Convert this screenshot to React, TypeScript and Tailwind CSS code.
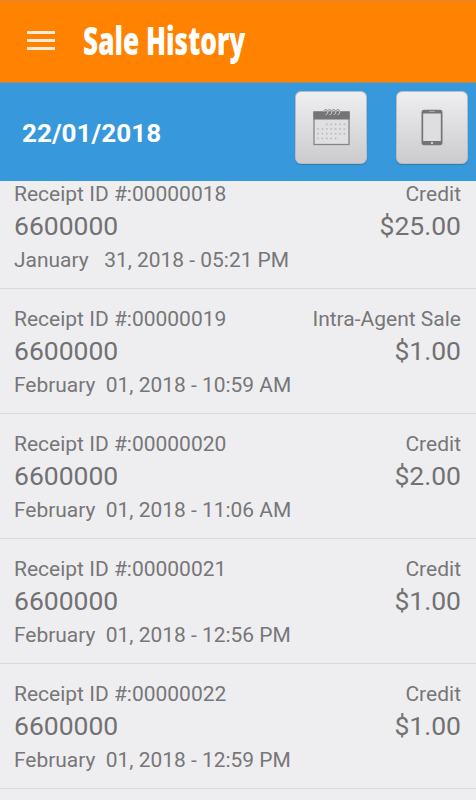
import type { ReactNode } from 'react';

type Sale = { id: string; type: string; account: string; amount: string; date: string };

const sales: Sale[] = [
  { id: '00000018', type: 'Credit', account: '6600000', amount: '$25.00', date: 'January   31, 2018 - 05:21 PM' },
  { id: '00000019', type: 'Intra-Agent Sale', account: '6600000', amount: '$1.00', date: 'February  01, 2018 - 10:59 AM' },
  { id: '00000020', type: 'Credit', account: '6600000', amount: '$2.00', date: 'February  01, 2018 - 11:06 AM' },
  { id: '00000021', type: 'Credit', account: '6600000', amount: '$1.00', date: 'February  01, 2018 - 12:56 PM' },
  { id: '00000022', type: 'Credit', account: '6600000', amount: '$1.00', date: 'February  01, 2018 - 12:59 PM' },
];

function CalendarIcon() {
  const dots: [number, number][] = [];
  for (let row = 0; row < 4; row++) {
    for (let col = 0; col < 7; col++) {
      if (row === 0 && col < 2) continue;
      if (row === 3 && col > 4) continue;
      dots.push([5 + col * 4.4, 15.3 + row * 4.7]);
    }
  }
  return (
    <svg width="37" height="37" viewBox="0 0 37 37" fill="none">
      <rect x="1" y="3" width="35" height="32.5" fill="#e0dfe1" stroke="#858585" strokeWidth="1.3" />
      <rect x="0.4" y="2.5" width="36.2" height="8" fill="#747474" />
      {[11, 15, 19, 23].map((x) => (
        <path key={x} d={`M${x} 2.5c0-2.6 3.6-2.6 3.8.2 0 2-1.1 3-2.3 3`} stroke="#cfcfd0" strokeWidth="1" />
      ))}
      {[11, 15, 19, 23].map((x) => (
        <path key={x} d={`M${x} 1.7c.4-1.5 3-1.5 3.5.4`} stroke="#858585" strokeWidth="1" />
      ))}
      {dots.map(([x, y]) => (
        <rect key={`${x}-${y}`} x={x - 0.8} y={y - 0.8} width="1.6" height="1.6" fill="#bab9bb" />
      ))}
    </svg>
  );
}

function PhoneIcon() {
  return (
    <svg width="22" height="37" viewBox="0 0 22 37" fill="none">
      <rect x="0.5" y="0.7" width="21" height="35.5" rx="2.6" fill="#747474" />
      <rect x="2.2" y="4.5" width="17.6" height="27.5" fill="#dedddf" />
      <path d="M8 2.5h6" stroke="#aaa" strokeWidth="0.9" />
      <circle cx="11" cy="34" r="1.2" fill="#d0d0d0" />
    </svg>
  );
}

function ToolButton({ label, children }: { label: string; children: ReactNode }) {
  return (
    <button
      aria-label={label}
      className="flex h-[73px] w-[72px] items-center justify-center rounded-[6px] border border-[#b5bcc3] bg-linear-to-b from-[#efeef0] to-[#cbcacc] shadow-[0_1px_1px_rgba(60,80,100,0.45)]"
    >
      {children}
    </button>
  );
}

function SaleRow({ sale }: { sale: Sale }) {
  return (
    <li className="h-[125px] border-b border-[#d9d9db] pt-[15px] pr-[15px] pl-[14px] text-[21px] text-[#777678]">
      <div className="flex justify-between leading-[30px]">
        <span>Receipt ID #:{sale.id}</span>
        <span>{sale.type}</span>
      </div>
      <div className="flex justify-between text-[26.5px] leading-[34px] text-[#727173]">
        <span>{sale.account}</span>
        <span>{sale.amount}</span>
      </div>
      <div className="text-[20.95px] leading-[34px] whitespace-pre">{sale.date}</div>
    </li>
  );
}

export default function App() {
  return (
    <div className="flex h-[800px] w-[476px] flex-col overflow-hidden bg-[#eeeef0] font-['Roboto',sans-serif]">
      <header className="flex h-[83px] shrink-0 items-center border-t border-b border-t-[#d98a3c] border-b-[#9a8f72] bg-[#ff8200] pb-[2px] pl-[27px]">
        <button aria-label="Menu" className="flex w-7 flex-col gap-[5px]">
          <span className="h-[3px] bg-[#ffecd8]" />
          <span className="h-[3px] bg-[#ffecd8]" />
          <span className="h-[3px] bg-[#ffecd8]" />
        </button>
        <h1 className="ml-[28px] origin-left scale-x-[0.69] pb-[2px] font-['Open_Sans',sans-serif] text-[38px] leading-[50px] font-extrabold whitespace-nowrap text-white">
          Sale History
        </h1>
      </header>
      <section className="flex h-[98px] shrink-0 items-start justify-between bg-[#3898dc] pt-2 pr-2 pl-[22px]">
        <time className="pt-[25px] text-[26.1px] leading-[34px] font-bold text-white">22/01/2018</time>
        <div className="flex gap-[29px]">
          <ToolButton label="Choose date">
            <CalendarIcon />
          </ToolButton>
          <ToolButton label="Choose phone">
            <PhoneIcon />
          </ToolButton>
        </div>
      </section>
      <main className="min-h-0 flex-1 overflow-hidden">
        <ul className="-mt-[17px]">
          {sales.map((sale) => (
            <SaleRow key={sale.id} sale={sale} />
          ))}
        </ul>
      </main>
    </div>
  );
}
